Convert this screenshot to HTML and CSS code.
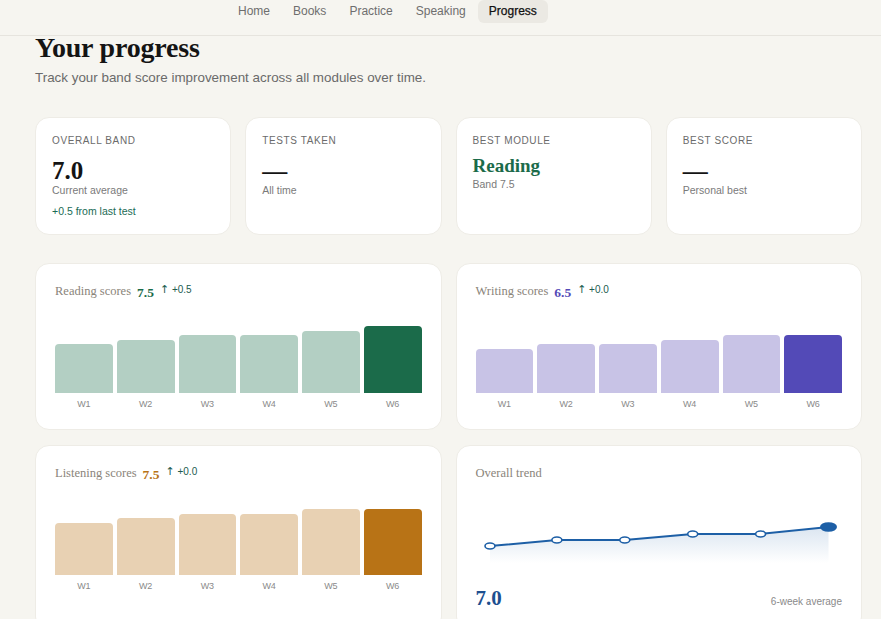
FILE: index.html
```html
<!DOCTYPE html>
<html lang="en">
<head>
    <meta charset="UTF-8">
    <meta name="viewport" content="width=device-width, initial-scale=1.0">
    <title>Progress</title>
    <link rel="stylesheet" href="styles.css">
</head>
<body>
    <header class="topbar">
        <nav class="tabs">
            <a class="tab" href="#">Home</a>
            <a class="tab" href="#">Books</a>
            <a class="tab" href="#">Practice</a>
            <a class="tab" href="#">Speaking</a>
            <a class="tab active" href="#">Progress</a>
        </nav>
    </header>

    <main class="page">
        <h1 class="page-title">Your progress</h1>
        <p class="page-sub">Track your band score improvement across all modules over time.</p>

        <section class="stats">
            <div class="stat-card">
                <div class="stat-label">Overall band</div>
                <div class="stat-value">7.0</div>
                <div class="stat-note">Current average</div>
                <div class="stat-delta">+0.5 from last test</div>
            </div>
            <div class="stat-card">
                <div class="stat-label">Tests taken</div>
                <div class="stat-value">—</div>
                <div class="stat-note">All time</div>
            </div>
            <div class="stat-card">
                <div class="stat-label">Best module</div>
                <div class="stat-module">Reading</div>
                <div class="stat-note">Band 7.5</div>
            </div>
            <div class="stat-card">
                <div class="stat-label">Best score</div>
                <div class="stat-value">—</div>
                <div class="stat-note">Personal best</div>
            </div>
        </section>

        <section class="charts">
            <div class="chart-card reading">
                <div class="chart-head">
                    <span class="chart-title">Reading scores</span>
                    <span class="chart-score">7.5</span>
                    <span class="chart-delta"><span class="arrow">↑</span> +0.5</span>
                </div>
                <div class="bars">
                    <div class="bar-col"><div class="bar-slot"><div class="bar" style="height: 49px"></div></div><span class="bar-label">W1</span></div>
                    <div class="bar-col"><div class="bar-slot"><div class="bar" style="height: 53px"></div></div><span class="bar-label">W2</span></div>
                    <div class="bar-col"><div class="bar-slot"><div class="bar" style="height: 58px"></div></div><span class="bar-label">W3</span></div>
                    <div class="bar-col"><div class="bar-slot"><div class="bar" style="height: 58px"></div></div><span class="bar-label">W4</span></div>
                    <div class="bar-col"><div class="bar-slot"><div class="bar" style="height: 62px"></div></div><span class="bar-label">W5</span></div>
                    <div class="bar-col"><div class="bar-slot"><div class="bar current" style="height: 67px"></div></div><span class="bar-label">W6</span></div>
                </div>
            </div>

            <div class="chart-card writing">
                <div class="chart-head">
                    <span class="chart-title">Writing scores</span>
                    <span class="chart-score">6.5</span>
                    <span class="chart-delta"><span class="arrow">↑</span> +0.0</span>
                </div>
                <div class="bars">
                    <div class="bar-col"><div class="bar-slot"><div class="bar" style="height: 44px"></div></div><span class="bar-label">W1</span></div>
                    <div class="bar-col"><div class="bar-slot"><div class="bar" style="height: 49px"></div></div><span class="bar-label">W2</span></div>
                    <div class="bar-col"><div class="bar-slot"><div class="bar" style="height: 49px"></div></div><span class="bar-label">W3</span></div>
                    <div class="bar-col"><div class="bar-slot"><div class="bar" style="height: 53px"></div></div><span class="bar-label">W4</span></div>
                    <div class="bar-col"><div class="bar-slot"><div class="bar" style="height: 58px"></div></div><span class="bar-label">W5</span></div>
                    <div class="bar-col"><div class="bar-slot"><div class="bar current" style="height: 58px"></div></div><span class="bar-label">W6</span></div>
                </div>
            </div>

            <div class="chart-card listening">
                <div class="chart-head">
                    <span class="chart-title">Listening scores</span>
                    <span class="chart-score">7.5</span>
                    <span class="chart-delta"><span class="arrow">↑</span> +0.0</span>
                </div>
                <div class="bars">
                    <div class="bar-col"><div class="bar-slot"><div class="bar" style="height: 52px"></div></div><span class="bar-label">W1</span></div>
                    <div class="bar-col"><div class="bar-slot"><div class="bar" style="height: 57px"></div></div><span class="bar-label">W2</span></div>
                    <div class="bar-col"><div class="bar-slot"><div class="bar" style="height: 61px"></div></div><span class="bar-label">W3</span></div>
                    <div class="bar-col"><div class="bar-slot"><div class="bar" style="height: 61px"></div></div><span class="bar-label">W4</span></div>
                    <div class="bar-col"><div class="bar-slot"><div class="bar" style="height: 66px"></div></div><span class="bar-label">W5</span></div>
                    <div class="bar-col"><div class="bar-slot"><div class="bar current" style="height: 66px"></div></div><span class="bar-label">W6</span></div>
                </div>
            </div>

            <div class="chart-card trend">
                <div class="chart-head">
                    <span class="chart-title">Overall trend</span>
                </div>
                <svg class="trend-chart" viewBox="0 0 367 72" preserveAspectRatio="none">
                    <defs>
                        <linearGradient id="trendFill" x1="0" y1="0" x2="0" y2="1">
                            <stop offset="0" stop-color="#1d5fa6" stop-opacity="0.16"/>
                            <stop offset="1" stop-color="#1d5fa6" stop-opacity="0"/>
                        </linearGradient>
                    </defs>
                    <path d="M14,53 L81,47 L149,47 L217,41 L285,41 L353,34 L353,70 L14,70 Z" fill="url(#trendFill)"/>
                    <polyline points="14,53 81,47 149,47 217,41 285,41 353,34" fill="none" stroke="#1d5fa6" stroke-width="2"/>
                    <ellipse cx="14" cy="53" rx="5" ry="3" fill="#fff" stroke="#1d5fa6" stroke-width="1.6"/>
                    <ellipse cx="81" cy="47" rx="5" ry="3" fill="#fff" stroke="#1d5fa6" stroke-width="1.6"/>
                    <ellipse cx="149" cy="47" rx="5" ry="3" fill="#fff" stroke="#1d5fa6" stroke-width="1.6"/>
                    <ellipse cx="217" cy="41" rx="5" ry="3" fill="#fff" stroke="#1d5fa6" stroke-width="1.6"/>
                    <ellipse cx="285" cy="41" rx="5" ry="3" fill="#fff" stroke="#1d5fa6" stroke-width="1.6"/>
                    <ellipse cx="353" cy="34" rx="8.5" ry="4.8" fill="#1d5fa6"/>
                </svg>
                <div class="trend-foot">
                    <span class="trend-value">7.0</span>
                    <span class="trend-note">6-week average</span>
                </div>
            </div>
        </section>
    </main>
</body>
</html>
```

FILE: styles.css
```css
* {
    margin: 0;
    padding: 0;
    box-sizing: border-box;
}

body {
    font-family: "Liberation Sans", Arial, sans-serif;
    background: #f6f5f0;
    color: #1a1a1a;
    overflow: hidden;
}

/* top bar */
.topbar {
    height: 36px;
    border-bottom: 1px solid #e6e4de;
    padding-left: 227px;
}

.tabs {
    display: flex;
    gap: 1px;
}

.tab {
    display: block;
    padding: 4px 11px 5px;
    line-height: 14px;
    font-size: 12px;
    color: #6e6e6e;
    text-decoration: none;
    border-radius: 6px;
}

.tab.active {
    background: #ebe9e3;
    color: #111;
    -webkit-text-stroke: 0.25px #111;
}

/* page */
.page {
    width: 827px;
    margin-left: 35px;
}

.page-title {
    font-family: "Liberation Serif", "Times New Roman", serif;
    font-size: 28px;
    font-weight: bold;
    line-height: 24px;
    color: #141414;
    letter-spacing: -0.2px;
}

.page-sub {
    margin-top: 9px;
    font-size: 13.4px;
    line-height: 18px;
    color: #6a6a6a;
}

/* stat cards */
.stats {
    display: grid;
    grid-template-columns: repeat(4, 1fr);
    gap: 14px;
    margin-top: 30px;
}

.stat-card {
    background: #fff;
    border: 1px solid #eeece6;
    border-radius: 14px;
    height: 118px;
    padding: 16px 16px;
}

.stat-label {
    font-size: 10px;
    line-height: 14px;
    letter-spacing: 0.6px;
    text-transform: uppercase;
    color: #6b6b6b;
}

.stat-value {
    margin-top: 10px;
    font-family: "Liberation Serif", "Times New Roman", serif;
    font-size: 25px;
    font-weight: bold;
    line-height: 25px;
    color: #141414;
}

.stat-module {
    margin-top: 7px;
    font-family: "Liberation Serif", "Times New Roman", serif;
    font-size: 19px;
    font-weight: bold;
    line-height: 22px;
    color: #1b6b4a;
}

.stat-note {
    font-size: 10.5px;
    line-height: 14px;
    color: #7a7a7a;
}

.stat-delta {
    margin-top: 7px;
    font-size: 10.5px;
    line-height: 14px;
    color: #1b6b55;
}

/* chart cards */
.charts {
    display: grid;
    grid-template-columns: 1fr 1fr;
    column-gap: 14px;
    row-gap: 15px;
    margin-top: 28px;
}

.chart-card {
    background: #fff;
    border: 1px solid #eeece6;
    border-radius: 14px;
    padding: 19px 19px;
}

.chart-head {
    display: flex;
    align-items: baseline;
    gap: 6px;
    height: 16px;
    line-height: 16px;
}

.chart-title {
    font-family: "Liberation Serif", "Times New Roman", serif;
    font-size: 12.5px;
    color: #8a847a;
}

.chart-score {
    font-family: "Liberation Serif", "Times New Roman", serif;
    font-size: 13.5px;
    font-weight: bold;
    position: relative;
    top: 2px;
}

.chart-delta {
    font-size: 10px;
    color: #215c4f;
    position: relative;
    top: -2px;
}

.arrow {
    font-family: "DejaVu Sans", sans-serif;
    font-size: 11px;
}

.bars {
    display: grid;
    grid-template-columns: repeat(6, 1fr);
    gap: 4px;
    margin-top: 14px;
}

.bar-col {
    display: flex;
    flex-direction: column;
    align-items: stretch;
}

.bar-slot {
    height: 80px;
    display: flex;
    flex-direction: column;
    justify-content: flex-end;
}

.bar {
    border-radius: 4px 4px 0 0;
}

.bar-label {
    margin-top: 5px;
    font-size: 9px;
    line-height: 12px;
    text-align: center;
    color: #8a8a8a;
}

.reading .chart-score { color: #1b6b4a; }
.reading .bar { background: #b3cfc3; }
.reading .bar.current { background: #1b6b4a; }

.writing .chart-score { color: #534ab7; }
.writing .bar { background: #c8c3e6; }
.writing .bar.current { background: #534ab7; }

.listening .chart-score { color: #b87316; }
.listening .bar { background: #e8d1b3; }
.listening .bar.current { background: #b87316; }

/* trend */
.trend-chart {
    display: block;
    width: 100%;
    height: 72px;
    margin-top: 12px;
}

.trend-foot {
    display: flex;
    justify-content: space-between;
    align-items: baseline;
    margin-top: 20px;
}

.trend-value {
    font-family: "Liberation Serif", "Times New Roman", serif;
    font-size: 21px;
    font-weight: bold;
    line-height: 26px;
    color: #1d4f8f;
}

.trend-note {
    font-size: 10px;
    color: #8a8a8a;
}
```
